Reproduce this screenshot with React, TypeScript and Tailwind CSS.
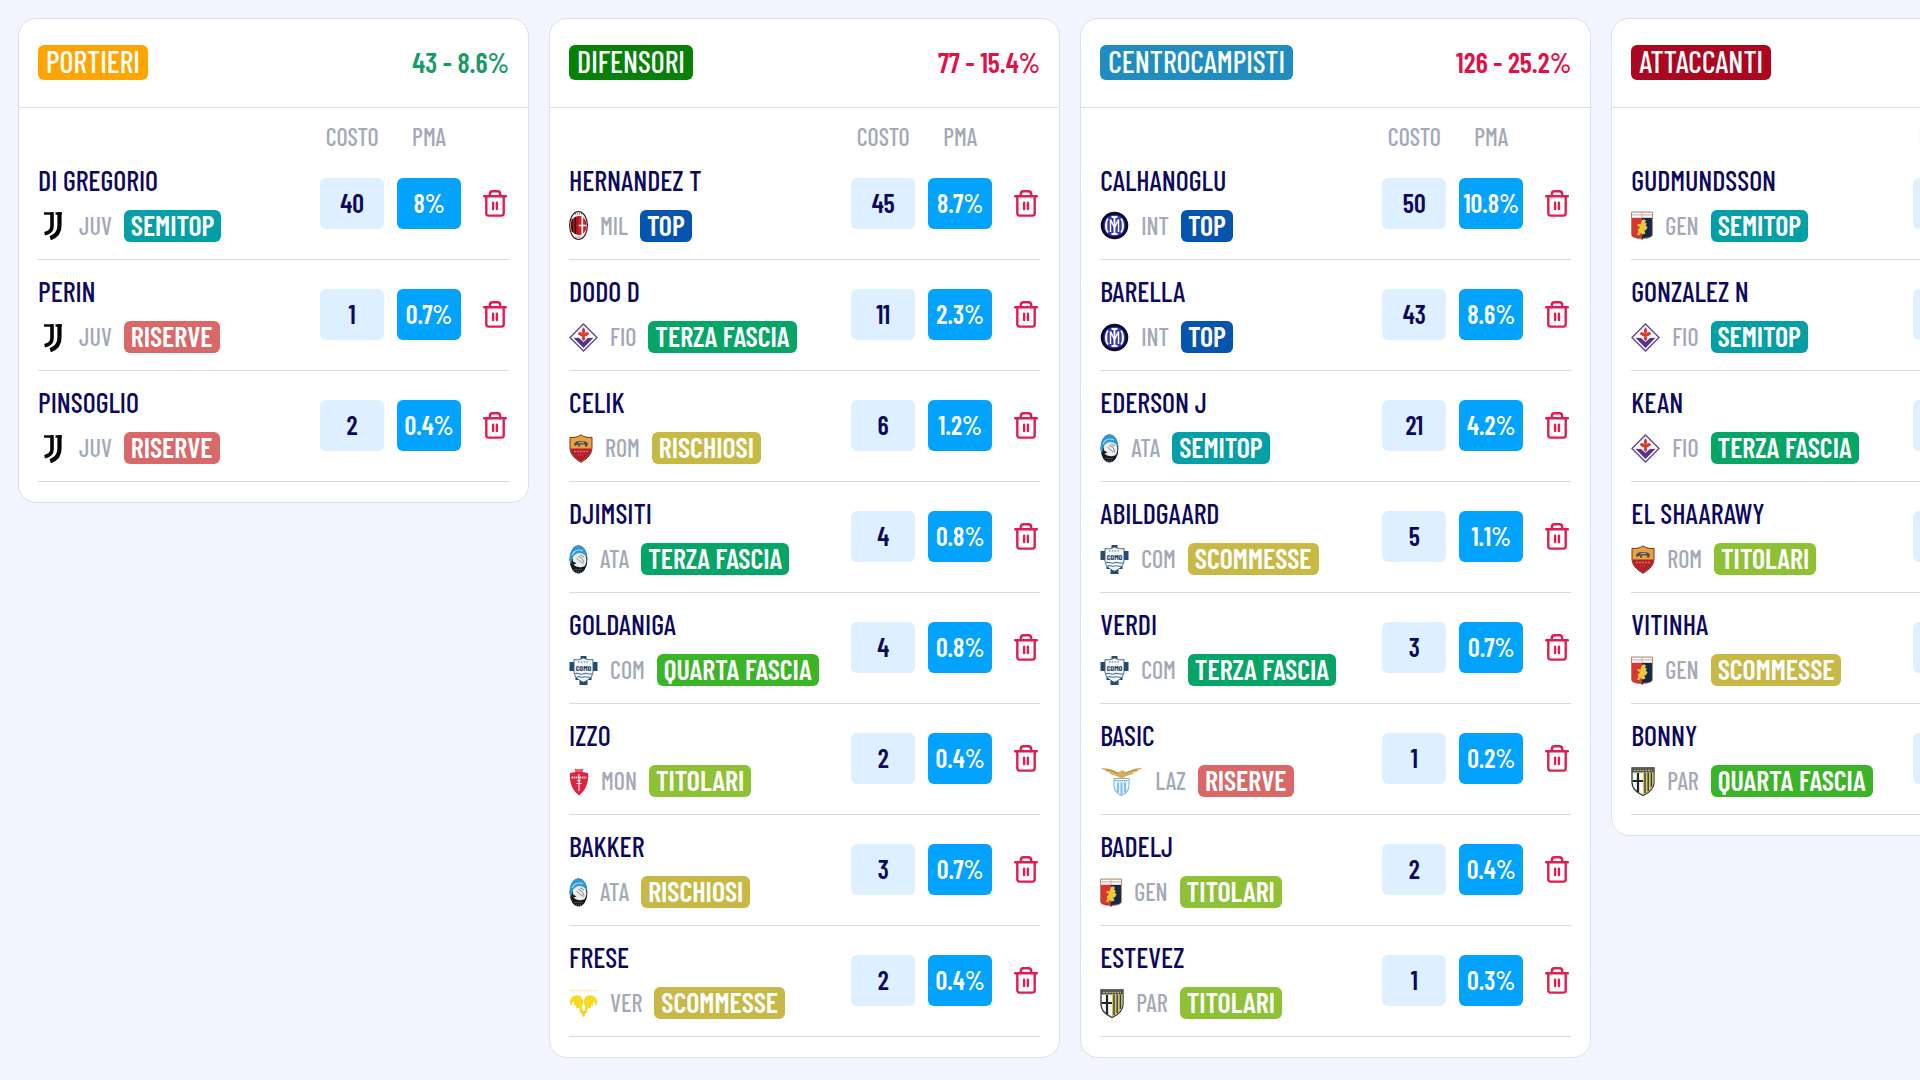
import type { ReactNode } from 'react';
import clsx from 'clsx';

type Tier = 'TOP' | 'SEMITOP' | 'TERZA FASCIA' | 'QUARTA FASCIA' | 'TITOLARI' | 'SCOMMESSE' | 'RISCHIOSI' | 'RISERVE';

interface Player {
  name: string;
  team: string;
  tier: Tier;
  cost: number;
  pma: string;
}

interface Role {
  label: string;
  color: string;
  total: string;
  overBudget?: boolean;
  players: Player[];
}

const tierColors: Record<Tier, string> = {
  'TOP': 'bg-[#0554ae]',
  'SEMITOP': 'bg-[#039fa6]',
  'TERZA FASCIA': 'bg-[#04a566]',
  'QUARTA FASCIA': 'bg-[#3cb428]',
  'TITOLARI': 'bg-[#8fc135]',
  'SCOMMESSE': 'bg-[#c8b946]',
  'RISCHIOSI': 'bg-[#c8b946]',
  'RISERVE': 'bg-[#d96868]',
};

const p = (name: string, team: string, tier: Tier, cost: number, pma: string): Player => ({ name, team, tier, cost, pma });

const roles: Role[] = [
  {
    label: 'PORTIERI',
    color: 'bg-[#ffa502]',
    total: '43 - 8.6%',
    players: [
      p('DI GREGORIO', 'JUV', 'SEMITOP', 40, '8%'),
      p('PERIN', 'JUV', 'RISERVE', 1, '0.7%'),
      p('PINSOGLIO', 'JUV', 'RISERVE', 2, '0.4%'),
    ],
  },
  {
    label: 'DIFENSORI',
    color: 'bg-[#068006]',
    total: '77 - 15.4%',
    overBudget: true,
    players: [
      p('HERNANDEZ T', 'MIL', 'TOP', 45, '8.7%'),
      p('DODO D', 'FIO', 'TERZA FASCIA', 11, '2.3%'),
      p('CELIK', 'ROM', 'RISCHIOSI', 6, '1.2%'),
      p('DJIMSITI', 'ATA', 'TERZA FASCIA', 4, '0.8%'),
      p('GOLDANIGA', 'COM', 'QUARTA FASCIA', 4, '0.8%'),
      p('IZZO', 'MON', 'TITOLARI', 2, '0.4%'),
      p('BAKKER', 'ATA', 'RISCHIOSI', 3, '0.7%'),
      p('FRESE', 'VER', 'SCOMMESSE', 2, '0.4%'),
    ],
  },
  {
    label: 'CENTROCAMPISTI',
    color: 'bg-[#208dc0]',
    total: '126 - 25.2%',
    overBudget: true,
    players: [
      p('CALHANOGLU', 'INT', 'TOP', 50, '10.8%'),
      p('BARELLA', 'INT', 'TOP', 43, '8.6%'),
      p('EDERSON J', 'ATA', 'SEMITOP', 21, '4.2%'),
      p('ABILDGAARD', 'COM', 'SCOMMESSE', 5, '1.1%'),
      p('VERDI', 'COM', 'TERZA FASCIA', 3, '0.7%'),
      p('BASIC', 'LAZ', 'RISERVE', 1, '0.2%'),
      p('BADELJ', 'GEN', 'TITOLARI', 2, '0.4%'),
      p('ESTEVEZ', 'PAR', 'TITOLARI', 1, '0.3%'),
    ],
  },
  {
    label: 'ATTACCANTI',
    color: 'bg-[#ab0720]',
    total: '254 - 50.8%',
    overBudget: true,
    players: [
      p('GUDMUNDSSON', 'GEN', 'SEMITOP', 90, '18%'),
      p('GONZALEZ N', 'FIO', 'SEMITOP', 85, '17%'),
      p('KEAN', 'FIO', 'TERZA FASCIA', 40, '8%'),
      p('EL SHAARAWY', 'ROM', 'TITOLARI', 20, '4%'),
      p('VITINHA', 'GEN', 'SCOMMESSE', 10, '2%'),
      p('BONNY', 'PAR', 'QUARTA FASCIA', 9, '1.8%'),
    ],
  },
];

// Club crests, all drawn on a 29 unit high canvas
const crests: Record<string, { width: number; art: ReactNode }> = {
  JUV: {
    width: 29,
    art: (
      <g fill="none" stroke="#050505">
        <path d="M6 2.500h9" strokeWidth="2.400" />
        <path d="M17.500 2.500h6.200" strokeWidth="2.400" />
        <path d="M14 1.300v14c0 3.700-2.400 6.400-7.400 7.400" strokeWidth="3.600" />
        <path d="M21.500 1.300v13.300c0 6.400-3.400 10.700-9.300 12.600" strokeWidth="4.200" />
      </g>
    ),
  },
  MIL: {
    width: 19,
    art: (
      <>
        <ellipse cx="9.500" cy="14.500" rx="8.900" ry="13.900" fill="#fff" stroke="#42201d" strokeWidth="1.200" />
        <ellipse cx="9.500" cy="14.500" rx="8" ry="9.600" fill="#b3151d" />
        <path d="M3.200 8v13M6.300 6v17" stroke="#28100f" strokeWidth="1.400" />
        <path d="M9.500 5c5 0 8 4 8 9.500s-3 9.500-8 9.500z" fill="#d0202a" />
        <path d="M9.600 14.500h7.800M13.300 6v17" stroke="#fff" strokeWidth="1.600" />
        <path d="M6 2.800h7M6.500 26h6" stroke="#5c3a38" strokeWidth="1" strokeDasharray="1 1" />
      </>
    ),
  },
  FIO: {
    width: 29,
    art: (
      <>
        <path d="M14.500 1 28 14.500 14.500 28 1 14.500z" fill="#fff" stroke="#6b4a9d" strokeWidth="1.500" />
        <path d="m4.500 14.800 5.500.2 4.500 4 4.500-4 5.500-.2-10 10.200z" fill="#57328f" />
        <path d="M14.500 4.300c2.300 2.400 1.800 4.600.8 6.700 1-2.300 3.700-2.900 4.500-.8.500 1.500-.7 2.200-1.700 1.500.3 1.200-1 1.600-2.400 1.500l.5 3-1.700 1.800-1.700-1.800.5-3c-1.400.1-2.700-.3-2.400-1.500-1 .7-2.200 0-1.700-1.500.8-2.100 3.500-1.500 4.500.8-1-2.100-1.500-4.300.8-6.700z" fill="#dd3826" />
      </>
    ),
  },
  ROM: {
    width: 24,
    art: (
      <>
        <path d="M12 .8C9.500 3 5 4 1 3.300v10c0 6.700 4 11 11 15 7-4 11-8.300 11-15v-10C19 4 14.500 3 12 .8z" fill="#eca13b" stroke="#713322" strokeWidth="1" />
        <path d="M1.500 14.600h21C22 20.500 18 24.600 12 27.800 6 24.600 2 20.500 1.500 14.600z" fill="#b31f2f" />
        <path d="M5 10c2-3 5-3.200 8-2.800 3 0 5 .5 6 2.400l-1 3.200h-1.700l-.3-2.200-4.500-.3-1 2.500H9l.3-2.400L7 11.300 5.500 12z" fill="#444b50" />
        <path d="M9.500 9c2-.8 4-.8 5.500 0" stroke="#e1d6bc" strokeWidth=".9" fill="none" />
        <path d="M5 17.500h14" stroke="#dc7458" strokeWidth="1.600" strokeDasharray="2 1" />
        <path d="M9 21h6" stroke="#ce6650" strokeWidth="1" strokeDasharray="1 1" />
      </>
    ),
  },
  ATA: {
    width: 19,
    art: (
      <>
        <ellipse cx="9.500" cy="14.500" rx="8.900" ry="14.100" fill="#15191d" />
        <path d="M.6 13C1 5 5 .5 9.500.5S18 5 18.400 13c-3-4-6-5-9-4S3 12 2 20C1 18 .5 16 .6 13z" fill="#2f97d4" />
        <path d="M3 10c2-4 6-6.300 11-4" stroke="#b5d8ec" strokeWidth="1.200" fill="none" />
        <path d="M4 12c3-5 9-5.200 12.500-1.300 1.500 3 1.200 7-.6 10-3 2.300-8.500 2-11.400-1.200l3-.9-3.600-2.400z" fill="#eceeee" />
        <path d="m9 11 4 2.500 2 4M7.500 13l3 3 4 2.500M11 9.800l4 2.200" stroke="#82888c" strokeWidth="1" fill="none" />
        <path d="M5.500 24.500h8M7 27h5" stroke="#727b82" strokeWidth="1" strokeDasharray="1 1" />
      </>
    ),
  },
  COM: {
    width: 29,
    art: (
      <>
        <path d="M11.500 0h6v6h11v9h-6v9h-4v5h-8v-5h-4v-9h-6V6h11z" fill="#214b73" />
        <path d="M5 3.500c3 .7 6 .3 9.500-1.600C18 3.800 21 4.200 24 3.500V15c0 5.400-3.500 8.800-9.500 11.200C8.500 23.800 5 20.400 5 15z" fill="#f5f8fb" stroke="#36587c" strokeWidth=".9" />
        <path d="M9 5.800h11" stroke="#6b86a3" strokeWidth="1.300" strokeDasharray="1.500 1.300" />
        <text x="14.500" y="14.800" textAnchor="middle" fontSize="8" fontWeight="700" fill="#1d3b63">COMO</text>
        <path d="M6 17.800c3-1.600 5.500 1.600 8.500 0s5.500 1.400 8.500 0M8 21c2.300-1.300 4.300 1.200 6.500 0s4.200 1.200 6.500 0" stroke="#47739b" strokeWidth="1.100" fill="none" />
      </>
    ),
  },
  MON: {
    width: 20,
    art: (
      <>
        <path d="M5.500 1.500c3 1 6 1 9 0l-.8 3.500H6.300z" fill="#ed5b6c" />
        <path d="M.8 6.300c4-1.600 14.400-1.600 18.400 0 .3 9-2 17-9.200 22.200C2.800 23.300.5 15.300.8 6.300z" fill="#dc2440" />
        <path d="M2.500 10.500h15" stroke="#fbd4da" strokeWidth="2" strokeDasharray="1.500 .6" />
        <path d="M10 7v17M7.500 16.500h5M8.500 13.600h3" stroke="#fff" strokeWidth="1.100" />
      </>
    ),
  },
  VER: {
    width: 29,
    art: (
      <>
        <path d="M1 1.500h27" stroke="#f7e7ac" strokeWidth="1.400" strokeDasharray="2 .8" />
        <path d="M1 15C.4 9.500 3.500 6.200 9 6.300c4 1 5.300 4 5 8.700l-1.200 2.500 1.200 8-3-2-1-4.700-2.500.5-.8-3.200-2.200.7.600-3.800L3 13.500 2.600 17z" fill="#f8da25" />
        <path d="M28 15c.6-5.500-2.500-8.800-8-8.700-4 1-5.300 4-5 8.700l1.200 2.500-1.200 8 3-2 1-4.700 2.500.5.800-3.200 2.200.7-.6-3.800 2.100.5.400 3.500z" fill="#f8da25" />
        <path d="M12.500 22h4l-.8 4.500-1.200 2-1.200-2z" fill="#edcf3d" />
      </>
    ),
  },
  INT: {
    width: 29,
    art: (
      <>
        <circle cx="14.500" cy="14.500" r="13.800" fill="#0a0a2c" />
        <circle cx="14.500" cy="14.500" r="10.800" fill="#3237b4" />
        <g fill="none" stroke="#fff">
          <path d="M14.500 6v17M11.500 6h6M11.500 23h6" strokeWidth="1.900" />
          <path d="M10.500 21V8.500l4 8 4-8V21" strokeWidth="1.500" />
          <path d="M8 7.500c-3 4-3 10 0 14M21 7.500c3 4 3 10 0 14" strokeWidth="1.700" />
          <path d="M6.800 11v7M22.200 11v7" strokeWidth="1" />
        </g>
      </>
    ),
  },
  LAZ: {
    width: 43,
    art: (
      <>
        <path d="M1 1c6 .2 11 1.400 15 3.400 2 1 3.500.8 5-.6 1-1 2.400-.9 3.400.5 1.400 1.200 3 .8 5-.2C33 2 37 .8 42.500 1c-2.500 1.600-4 2-6 2.500l2 .3c-2 1.200-4.500 1.600-6 1.800l1.500.8c-3 1.300-6 1.700-8.500 3l-4 2.400-4-2.200C15 8.200 12 7.800 9 6.200l1.800-.6C8.500 5.300 6.500 4.800 4.500 3.600L7 3.500C4.500 3 3 2.500 1 1z" fill="#d8ae5e" />
        <path d="M6 2.800c5 .4 8 1.500 11.500 3.500M37 2.800c-5 .4-8 1.500-11.500 3.500" stroke="#a67f3b" strokeWidth=".8" fill="none" />
        <path d="M14 11.500h15v7c0 5-3 8-7.500 10-4.500-2-7.500-5-7.500-10z" fill="#f6fbff" stroke="#82b6db" strokeWidth="1.100" />
        <path d="M18 15.500v10M21.500 15.500v12M25 15.500v10" stroke="#7fc0ec" strokeWidth="2.200" />
        <path d="M15 13.700h13" stroke="#5c9fce" strokeWidth="1.200" strokeDasharray="1.500 .7" />
      </>
    ),
  },
  GEN: {
    width: 22,
    art: (
      <>
        <path d="M.6 1h20.800v22.500c0 3-5.400 3.800-8.400 3.800l-2 1.200-2-1.200c-3 0-8.400-.8-8.400-3.800z" fill="#15284b" stroke="#b9825a" strokeWidth=".9" />
        <path d="M1 6.500h10V28l-2-1.200c-3 0-8-.8-8-3.300z" fill="#d73632" />
        <path d="M1 1.400h20v5.400H1z" fill="#fff" />
        <path d="M1 3.900h20M11 1.400v5.400" stroke="#df9c91" strokeWidth="1" />
        <path d="m11 9 2.200-.8 1.800 1.500-1 2 1.800.7-1 2.400 1.800 1.400-1.600 3-1.800.3 1.300 3-2.700 1-2-1.500-1.600 2.300-2.200-.5 1.500-3.500-1-1.500 2.600-2.500-3-1.700.8-1.900 2.500.8z" fill="#efc63c" />
      </>
    ),
  },
  PAR: {
    width: 24,
    art: (
      <>
        <path d="M1 .8h22v14.700c0 6-3.800 9.700-11 13-7.200-3.300-11-7-11-13z" fill="#fafaf6" stroke="#303337" strokeWidth="1.300" />
        <path d="M1.500 1.300h21v4.200h-21z" fill="#41464c" />
        <path d="M3 3.400h18" stroke="#c6b55e" strokeWidth="1.500" strokeDasharray="2 .8" />
        <path d="M12 5.500h10.400v10c0 5.300-3.400 8.900-10.400 12.300z" fill="#e1c54b" />
        <path d="M14 5.500v20.800M17.200 5.500v18.500M20.400 5.500V20" stroke="#253f67" strokeWidth="1.400" />
        <path d="M7 6v19M1.500 14H12" stroke="#202327" strokeWidth="2.200" />
      </>
    ),
  },
};

function Crest({ team }: { team: string }) {
  const { width, art } = crests[team];
  return (
    <svg width={width} height={29} viewBox={`0 0 ${width} 29`} className="shrink-0" aria-hidden="true">
      {art}
    </svg>
  );
}

function TrashIcon() {
  return (
    <svg width="24" height="27" viewBox="0 0 24 27" fill="none" stroke="#e11d50" strokeWidth="2.400" strokeLinecap="round" strokeLinejoin="round" aria-hidden="true">
      <path d="M1.200 6.200h21.600" />
      <path d="M6.800 6V4.200c0-1.700 1.100-2.900 2.700-2.900h5c1.600 0 2.700 1.200 2.700 2.900V6" />
      <path d="M3.300 6.400v16.800c0 1.400 1 2.400 2.400 2.400h12.600c1.400 0 2.400-1 2.400-2.400V6.400" />
      <path d="M10.100 12.800v6.200M13.900 12.800v6.200" />
    </svg>
  );
}

function PlayerRow({ player }: { player: Player }) {
  return (
    <tr className="h-[111px] border-b border-[#d5dce6]">
      <td>
        <div className="text-[28px] leading-[31px] font-medium text-[#0c085e] whitespace-nowrap">{player.name}</div>
        <div className="mt-[14px] flex items-center gap-3">
          <Crest team={player.team} />
          <span className="text-[24px] leading-8 font-medium text-[#a3a9b7]">{player.team}</span>
          <span className={clsx('h-8 rounded-md px-[7px] text-[28px] leading-[30px] font-semibold text-white whitespace-nowrap', tierColors[player.tier])}>
            {player.tier}
          </span>
        </div>
      </td>
      <td className="w-[77px] pr-[13px]">
        <div className="h-[51px] rounded-md bg-[#def0ff] text-center text-[26px] leading-[49px] font-semibold text-[#0c085e]">{player.cost}</div>
      </td>
      <td className="w-16">
        <div className="h-[51px] rounded-md bg-[#02a2ff] text-center text-[26px] leading-[49px] font-semibold text-white">{player.pma}</div>
      </td>
      <td className="w-12 pr-[2px]">
        <button type="button" aria-label="Elimina" className="ml-auto block cursor-pointer">
          <TrashIcon />
        </button>
      </td>
    </tr>
  );
}

function RoleCard({ role }: { role: Role }) {
  return (
    <section className="w-[26.62vw] shrink-0 rounded-[18px] border border-[#d9e0ee] bg-white">
      <div className="flex h-[89px] items-center justify-between border-b border-[#d9e0ea] px-[19px] pb-[2px]">
        <h2 className={clsx('h-[35px] rounded-md px-2 text-[30px] leading-[33px] font-medium text-white', role.color)}>{role.label}</h2>
        <span className={clsx('text-[28px] leading-[34px] font-semibold', role.overBudget ? 'text-[#e11147]' : 'text-[#179c66]')}>{role.total}</span>
      </div>
      <div className="px-[19px] pb-5">
        <table className="w-full border-collapse">
          <thead>
            <tr className="text-[24px] leading-[22px] text-[#a3a9b7]">
              <td />
              <th scope="col" className="pr-[13px] pt-[18px] font-medium">COSTO</th>
              <th scope="col" className="pt-[18px] font-medium">PMA</th>
              <td />
            </tr>
          </thead>
          <tbody>
            {role.players.map((player) => (
              <PlayerRow key={player.name} player={player} />
            ))}
          </tbody>
        </table>
      </div>
    </section>
  );
}

export default function App() {
  return (
    <main className="flex min-h-screen items-start gap-5 overflow-x-auto bg-[#f3f4fd] p-[18px] font-['Barlow_Condensed','Roboto_Condensed','Liberation_Sans_Narrow',Roboto,sans-serif] [scrollbar-width:none]">
      {roles.map((role) => (
        <RoleCard key={role.label} role={role} />
      ))}
    </main>
  );
}
